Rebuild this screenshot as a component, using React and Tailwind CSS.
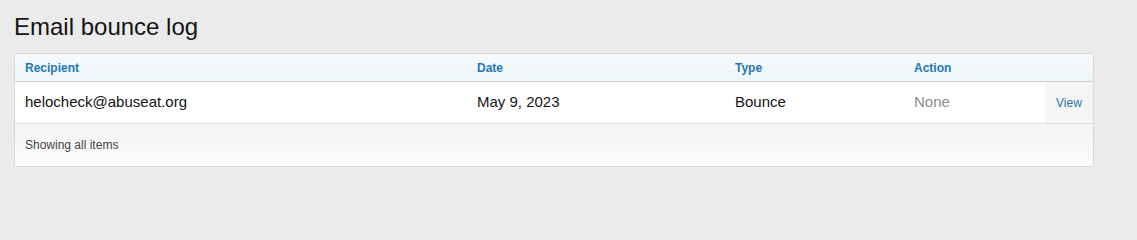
import React from "react";

const rows = [
  { recipient: "helocheck@abuseat.org", date: "May 9, 2023", type: "Bounce", action: "None" },
];

const App = () => {
  return (
    <div
      className="w-full min-h-screen bg-[#ebebeb] px-[14px] pt-[12px] text-[#141414]"
      style={{ fontFamily: '"Liberation Sans", Arial, sans-serif' }}
    >
      <h1 className="text-[24px] leading-[30px] font-normal text-[#141414]">Email bounce log</h1>

      <div className="mt-[11px] w-[1080px] rounded-[3px] border border-[#d8d8d8] bg-white overflow-hidden">
        <div className="flex h-[28px] items-center bg-gradient-to-b from-[#f5fafd] to-[#eef6fb] border-b border-[#d0d0d0] text-[12px] font-bold text-[#2577b1]">
          <div className="w-[462px] pl-[10px]">Recipient</div>
          <div className="w-[258px]">Date</div>
          <div className="w-[179px]">Type</div>
          <div className="flex-1">Action</div>
        </div>

        {rows.map((r) => (
          <div key={r.recipient} className="flex h-[42px] items-stretch border-b border-[#dedede] text-[15px]">
            <div className="w-[462px] pl-[10px] flex items-center">{r.recipient}</div>
            <div className="w-[258px] flex items-center">{r.date}</div>
            <div className="w-[179px] flex items-center">{r.type}</div>
            <div className="flex-1 flex items-center text-[#8c8c8c]">{r.action}</div>
            <a href="#" className="w-[47px] bg-[#f5f5f5] flex items-center pl-[10px] text-[12px] text-[#2577b1]">
              View
            </a>
          </div>
        ))}

        <div className="h-[42px] flex items-center pl-[10px] bg-gradient-to-b from-[#f4f4f4] to-[#fbfbfb] text-[12px] text-[#454545]">
          Showing all items
        </div>
      </div>
    </div>
  );
};

export default App;
